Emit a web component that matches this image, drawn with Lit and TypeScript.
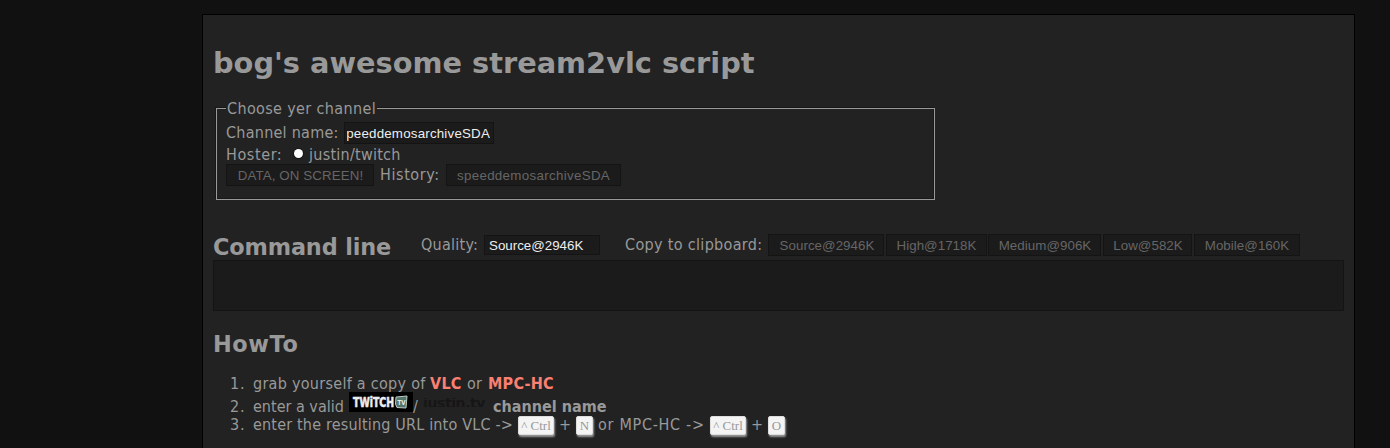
import { LitElement, html, css } from 'lit';
import { customElement } from 'lit/decorators.js';

const QUALITIES = [
  ['source', 'Source@2946K'],
  ['high', 'High@1718K'],
  ['medium', 'Medium@906K'],
  ['low', 'Low@582K'],
  ['mobile', 'Mobile@160K'],
];

@customElement('app-root')
export class AppRoot extends LitElement {
  static styles = css`
    * { box-sizing: border-box; }
    :host {
      display: block; height: 448px; overflow: hidden; background: #111; color: #999;
      font: 16px/20px "DejaVu Sans Condensed", "DejaVu Sans", sans-serif;
      letter-spacing: 0.25px; white-space: nowrap;
    }
    .page { height: 500px; margin: 14px 35px 0 202px; padding: 0 10px; background: #222; border: 1px solid #000; }
    h1, h2 { margin: 0; font-family: "DejaVu Sans", sans-serif; font-weight: bold; letter-spacing: 0; }
    h1 { padding-top: 30px; height: 83px; font-size: 28.8px; line-height: 36px; }
    h2 { font-size: 22.4px; line-height: 28px; }
    .row { display: flex; align-items: flex-start; }
    .row > * { flex: none; }
    fieldset {
      margin: 0 0 0 3px; padding: 0; min-width: 0; width: 719px; height: 102px; border: 1px solid #999;
      box-shadow: -1px -1px 0 #181818, inset -1px -1px 0 #181818;
    }
    .channel { height: 102px; }
    legend { margin-left: 9px; padding: 1px 1px 0; width: 151px; height: 20px; background: #222; letter-spacing: 0.36px; }
    .fields { padding: 4px 0 0 9px; }
    .box {
      font: 13.33px/20px "Liberation Sans", Arial, sans-serif; letter-spacing: 0;
      background: #1b1b1b; border: 1px solid #141414; height: 22px; text-align: center; color: #666;
    }
    .name { width: 150px; color: #eee; overflow: hidden; display: flex; justify-content: flex-end; padding: 0 3px 0 2px; letter-spacing: 0.2px; line-height: 21px; }
    .name span { overflow: hidden; display: flex; justify-content: flex-end; }
    .l-name { width: 118px; padding-top: 1px; letter-spacing: 0.25px; }
    .l-host { width: 68px; letter-spacing: 0.6px; }
    .radio { width: 9px; height: 9px; border-radius: 50%; background: #fff; box-shadow: 0 0 0 1px #161616; margin: 5px 6px 0 0; }
    .hoster { height: 20px; }
    .hoster > span { padding-top: 1px; }
    .go { width: 148px; margin-right: 6px; padding-left: 1px; letter-spacing: 0.1px; line-height: 21px; }
    .l-hist { width: 66px; padding-top: 1px; letter-spacing: 0.6px; }
    .hist { width: 175px; letter-spacing: 0.32px; line-height: 21px; }
    .command { padding-top: 33px; height: 60px; }
    .command h2 { width: 208px; letter-spacing: -0.15px; }
    .l-qual { width: 63px; padding-top: 2px; letter-spacing: 0.25px; }
    .select { width: 116px; height: 20px; line-height: 19px; text-align: left; padding-left: 4px; color: #eee; margin: 2px 25px 0 0; }
    .l-copy { width: 143px; padding-top: 2px; letter-spacing: 0.33px; }
    .quality { margin: 1px 2px 0 0; line-height: 21px; letter-spacing: 0.05px; }
    .source { width: 116px; padding-left: 2px; }
    .high { width: 101px; margin-right: 1px; }
    .medium { width: 113px; padding-left: 1px; }
    .low { width: 89px; padding-left: 1px; }
    .mobile { width: 106px; }
    .output { height: 51px; background: #1b1b1b; border: 1px solid #141414; }
    .howto { padding-top: 19px; height: 63px; letter-spacing: 0.6px; }
    ol { list-style: none; margin: 0; padding: 0 0 0 17px; }
    li { display: flex; height: 20px; }
    li > * { flex: none; }
    .num { width: 23px; letter-spacing: 0.8px; }
    .grab { width: 177px; letter-spacing: 0.28px; }
    .link { color: #fa8072; }
    .vlc { width: 37px; }
    .or { width: 21px; }
    .valid { height: 21px; }
    .valid > .num, .valid > .t { padding-top: 3px; }
    .enter { width: 96px; letter-spacing: 0; }
    .twitch { display: block; width: 64px; height: 20px; margin-top: -2px; background: #000; }
    .brand { fill: #eee; stroke: #eee; stroke-width: .6; font: bold 14px "DejaVu Sans Condensed", sans-serif; letter-spacing: 0; }
    .tv { fill: #e2eee8; font: bold 7px "DejaVu Sans Condensed", sans-serif; letter-spacing: 0; }
    .slash { width: 10px; }
    .justin { width: 70px; height: 20px; margin-top: 0; color: #161616; font: bold 14px/18px "DejaVu Sans", sans-serif; letter-spacing: -0.4px; }
    .justin span { display: block; clip-path: inset(4px 0 5px 0); }
    .cname { letter-spacing: 0; }
    .url { width: 265px; letter-spacing: 0.18px; }
    .key {
      height: 19px; margin-top: 1px; background: #f4f4f4; border: 1px solid #ddd; border-radius: 2px;
      box-shadow: 1px 2px 2px #999; color: #999; text-align: center;
      font: 13px/18px "Liberation Serif", "Times New Roman", serif; letter-spacing: 0;
    }
    .ctrl { width: 36px; margin-right: 5px; }
    .plus { width: 17px; }
    .letter { width: 17px; }
    .alt { width: 112px; padding-left: 5px; margin-right: 5px; letter-spacing: 0.7px; }
  `;

  private twitchLogo() {
    return html`
      <svg class="twitch" width="64" height="20" viewBox="0 0 64 20">
        <text class="brand" x="4" y="15" textLength="41" lengthAdjust="spacingAndGlyphs">TWiTCH</text>
        <path d="M47 5L58 4L57 16L48 15.5L46.5 12Z" fill="#53756a" stroke="#bbcac4"></path>
        <text class="tv" x="48.5" y="12.5" textLength="8" lengthAdjust="spacingAndGlyphs">TV</text>
      </svg>`;
  }

  render() {
    return html`
      <main class="page">
        <h1>bog's awesome stream2vlc script</h1>
        <section class="channel"><fieldset>
          <legend>Choose yer channel</legend>
          <div class="fields">
            <div class="row"><span class="l-name">Channel name:</span><div class="box name"><span>speeddemosarchiveSDA</span></div></div>
            <div class="row hoster"><span class="l-host">Hoster:</span><i class="radio"></i><span>justin/twitch</span></div>
            <div class="row"><div class="box go">DATA, ON SCREEN!</div><span class="l-hist">History:</span><div class="box hist">speeddemosarchiveSDA</div></div>
          </div>
        </fieldset></section>
        <section class="row command">
          <h2>Command line</h2>
          <span class="l-qual">Quality:</span><div class="box select">Source@2946K</div>
          <span class="l-copy">Copy to clipboard:</span>
          ${QUALITIES.map(([c, t]) => html`<div class="box quality ${c}">${t}</div>`)}
        </section>
        <div class="output"></div>
        <h2 class="howto">HowTo</h2>
        <ol>
          <li><span class="num">1.</span><span class="grab">grab yourself a copy of</span><b class="link vlc">VLC</b><span class="or">or</span><b class="link">MPC-HC</b></li>
          <li class="valid"><span class="num">2.</span><span class="t enter">enter a valid</span>${this.twitchLogo()}<span class="t slash">/</span><div class="justin"><span>justin.tv</span></div><b class="t cname">channel name</b></li>
          <li><span class="num">3.</span><span class="url">enter the resulting URL into VLC -&gt;</span><span class="key ctrl">^ Ctrl</span><span class="plus">+</span><span class="key letter">N</span><span class="alt">or MPC-HC -&gt;</span><span class="key ctrl">^ Ctrl</span><span class="plus">+</span><span class="key letter">O</span></li>
        </ol>
      </main>`;
  }
}
